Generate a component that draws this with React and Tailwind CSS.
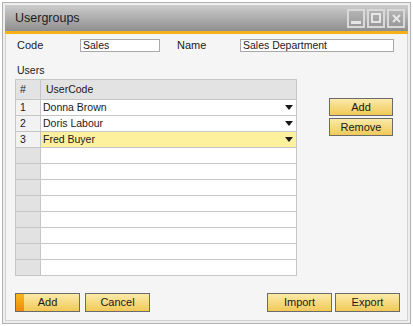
const rows = [
  { n: '1', code: 'Donna Brown' },
  { n: '2', code: 'Doris Labour' },
  { n: '3', code: 'Fred Buyer', active: true },
  ...Array.from({ length: 8 }, () => ({ n: '', code: '', empty: true })),
];

const goldBtn =
  'flex items-center justify-center border border-[#6b6b6b] bg-gradient-to-b from-[#fbeaa8] to-[#f1c954] text-[11px] text-[#1a1a1a]';

function Caret() {
  return (
    <svg width="8" height="5" viewBox="0 0 8 5" className="mr-[3px]">
      <polygon points="0,0 8,0 4,5" fill="#1a1a1a" />
    </svg>
  );
}

function WinBtn({ children }) {
  return (
    <div className="flex h-[19px] w-[18px] items-center justify-center border-2 border-[#d9d9d9] bg-gradient-to-b from-[#b4b4b4] to-[#999999]">
      {children}
    </div>
  );
}

export default function App() {
  return (
    <div
      className="h-[326px] w-[413px] bg-white pl-[2px] pt-[2px]"
      style={{ fontFamily: '"Liberation Sans", Arial, sans-serif' }}
    >
      <div className="flex h-[322px] w-[409px] flex-col border border-[#b0b0b0] bg-[#eeeeee] p-[2px]">
        {/* title bar */}
        <div className="flex h-[26px] items-center justify-between bg-gradient-to-b from-[#cdcdcd] to-[#8f8f8f] pl-[10px] pr-[3px]">
          <span className="text-[12.5px] text-[#1c1c1c]">Usergroups</span>
          <div className="flex gap-[2px]">
            <WinBtn>
              <div className="mt-[8px] h-[3px] w-[10px] bg-[#e6e6e6]" />
            </WinBtn>
            <WinBtn>
              <div className="h-[10px] w-[10px] border-2 border-[#e6e6e6]" />
            </WinBtn>
            <WinBtn>
              <svg width="9" height="9" viewBox="0 0 9 9">
                <path d="M1 1 L8 8 M8 1 L1 8" stroke="#e6e6e6" strokeWidth="2" />
              </svg>
            </WinBtn>
          </div>
        </div>
        <div className="h-[3px] bg-[#f5b01c]" />

        {/* body */}
        <div className="flex flex-1 flex-col border-x border-b border-[#d2d2d2] bg-[#f5f5f5] text-[11px] text-[#1a1a1a]">
          <div className="mt-[5px] flex h-[13px] items-center">
            <span className="ml-[11px] w-[63px]">Code</span>
            <div className="flex h-[13px] w-[80px] items-center border border-[#a9a9a9] bg-white pl-[2px] text-[10.5px]">
              Sales
            </div>
            <span className="ml-[17px] w-[63px]">Name</span>
            <div className="flex h-[13px] w-[154px] items-center border border-[#a9a9a9] bg-white pl-[2px] text-[10.5px]">
              Sales Department
            </div>
          </div>

          <div className="ml-[11px] mt-[12px] h-[12px] leading-[12px] text-[10.5px]">Users</div>

          <div className="ml-[9px] mt-[3px] flex">
            <div className="w-[282px] border-x border-t border-[#c6c6c6] bg-white">
              <div className="flex h-[20px] border-b border-[#c6c6c6] bg-[#e3e3e3] text-[10.5px]">
                <div className="flex w-[25px] items-center border-r border-[#c6c6c6] pl-[4px]">#</div>
                <div className="flex flex-1 items-center pl-[5px]">UserCode</div>
              </div>
              {rows.map((r, i) => (
                <div
                  key={i}
                  className={`flex h-[16px] border-b border-[#c6c6c6] text-[10.5px] ${
                    r.active ? 'bg-[#fdf19e]' : 'bg-white'
                  }`}
                >
                  <div
                    className={`flex w-[25px] items-center border-r border-[#c6c6c6] pl-[4px] ${
                      r.empty ? 'bg-[#e2e2e2]' : 'bg-[#f2f2f2]'
                    }`}
                  >
                    {r.n}
                  </div>
                  <div className="flex flex-1 items-center justify-between pl-[2px]">
                    <span>{r.code}</span>
                    {!r.empty && <Caret />}
                  </div>
                </div>
              ))}
            </div>

            <div className="ml-[32px] mt-[19px] flex flex-col gap-[2px]">
              <div className={`${goldBtn} h-[18px] w-[64px]`}>Add</div>
              <div className={`${goldBtn} h-[18px] w-[64px]`}>Remove</div>
            </div>
          </div>

          <div className="ml-[9px] mt-[17px] flex h-[19px]">
            <div className={`${goldBtn} relative h-[19px] w-[65px]`}>
              <div className="absolute bottom-0 left-0 top-0 w-[8px] bg-gradient-to-b from-[#f7b81c] to-[#ef8a0c]" />
              Add
            </div>
            <div className={`${goldBtn} ml-[5px] h-[19px] w-[65px]`}>Cancel</div>
            <div className={`${goldBtn} ml-[117px] h-[19px] w-[65px]`}>Import</div>
            <div className={`${goldBtn} ml-[3px] h-[19px] w-[65px]`}>Export</div>
          </div>
        </div>
      </div>
    </div>
  );
}
